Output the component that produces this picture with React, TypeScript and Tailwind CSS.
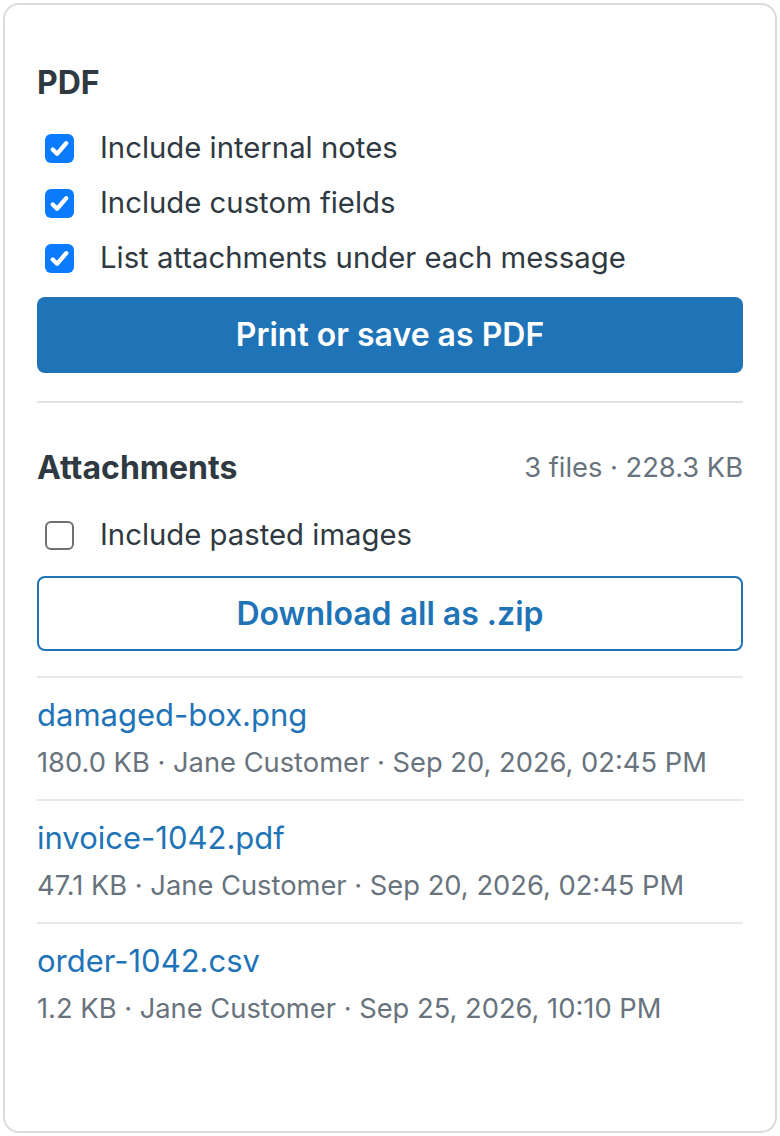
import React, { useState } from 'react';

const font = { fontFamily: 'Inter, "Noto Sans", sans-serif' };

interface CheckRowProps {
  label: string;
  checked: boolean;
  onToggle: () => void;
}

const CheckRow: React.FC<CheckRowProps> = ({ label, checked, onToggle }) => (
  <label className="flex h-10 cursor-pointer items-center" onClick={onToggle}>
    <span className="ml-2 mr-[26px] flex h-[29px] w-[29px] items-center justify-center">
      {checked ? (
        <span className="flex h-[29px] w-[29px] items-center justify-center rounded-[6px] bg-[#0a7aff]">
          <svg width="23" height="23" viewBox="0 0 16 16" fill="none">
            <path d="M3.3 8.7l3 3L12.7 4.3" stroke="#fff" strokeWidth="3" strokeLinecap="round" strokeLinejoin="round" />
          </svg>
        </span>
      ) : (
        <span className="h-[29px] w-[29px] rounded-[6px] border-2 border-[#707070] bg-white" />
      )}
    </span>
    <span className="text-[29.3px] leading-10 text-[#2f3941]">{label}</span>
  </label>
);

const files = [
  { name: 'damaged-box.png', meta: '180.0 KB · Jane Customer · Sep 20, 2026, 02:45 PM' },
  { name: 'invoice-1042.pdf', meta: '47.1 KB · Jane Customer · Sep 20, 2026, 02:45 PM' },
  { name: 'order-1042.csv', meta: '1.2 KB · Jane Customer · Sep 25, 2026, 10:10 PM' },
];

const App: React.FC = () => {
  const [opts, setOpts] = useState({ notes: true, fields: true, list: true, pasted: false });
  const toggle = (k: keyof typeof opts) => setOpts((o) => ({ ...o, [k]: !o[k] }));

  return (
    <div className="bg-white p-[3px]" style={font}>
      <div className="h-[1130px] rounded-[16px] border-2 border-[#d8dcde] bg-white px-8 pt-[58px]">
        <h2 className="text-[32px] font-bold leading-10 text-[#2f3941]">PDF</h2>

        <div className="mt-[25px] flex flex-col gap-[15px]">
          <CheckRow label="Include internal notes" checked={opts.notes} onToggle={() => toggle('notes')} />
          <CheckRow label="Include custom fields" checked={opts.fields} onToggle={() => toggle('fields')} />
          <CheckRow label="List attachments under each message" checked={opts.list} onToggle={() => toggle('list')} />
        </div>

        <button className="mt-[19px] flex h-[76px] w-full items-center justify-center rounded-[8px] bg-[#1f73b7] text-[32px] font-semibold text-white">
          Print or save as PDF
        </button>

        <div className="mt-[28px] h-[2px] bg-[#e0e3e5]" />

        <div className="mt-[45px] flex h-10 items-center justify-between">
          <h2 className="text-[32px] font-bold text-[#2f3941]">Attachments</h2>
          <span className="text-[27.3px] text-[#68737d]">3 files · 228.3 KB</span>
        </div>

        <div className="mt-[27px]">
          <CheckRow label="Include pasted images" checked={opts.pasted} onToggle={() => toggle('pasted')} />
        </div>

        <button className="mt-[21px] flex h-[75px] w-full items-center justify-center rounded-[8px] border-2 border-[#1f73b7] bg-white text-[32px] font-semibold text-[#1f73b7]">
          Download all as .zip
        </button>

        <ul className="mt-[25px]">
          {files.map((f) => (
            <li key={f.name} className="border-t-2 border-[#e6e8ea] pb-[18px] pt-[17px]">
              <a href="#" className="block text-[31px] leading-10 text-[#1f73b7]">
                {f.name}
              </a>
              <div className="mt-[10px] text-[27.3px] leading-9 text-[#68737d]">{f.meta}</div>
            </li>
          ))}
        </ul>
      </div>
    </div>
  );
};

export default App;
